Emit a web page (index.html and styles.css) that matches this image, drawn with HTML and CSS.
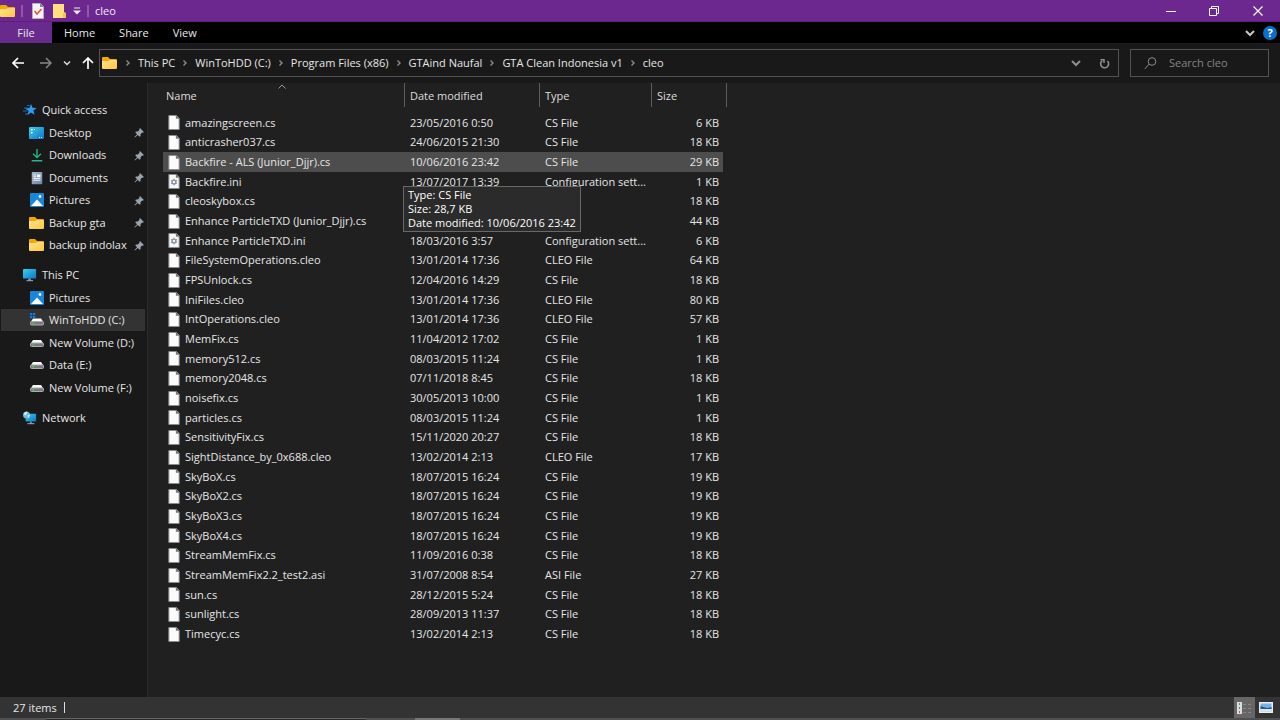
FILE: index.html
```html
<!DOCTYPE html>
<html lang="en">
<head>
<meta charset="utf-8">
<title>cleo</title>
<link rel="stylesheet" href="styles.css">
</head>
<body>
<svg class="sprite" aria-hidden="true">
  <defs>
    <linearGradient id="gold" x1="0" y1="0" x2="1" y2="1"><stop offset="0" stop-color="#ffe391"/><stop offset="1" stop-color="#ffc73c"/></linearGradient>
    <linearGradient id="screen" x1="0" y1="0" x2="1" y2="1"><stop offset="0" stop-color="#37d2ea"/><stop offset="1" stop-color="#1272c8"/></linearGradient>
    <linearGradient id="paper" x1="0" y1="0" x2="1" y2="1"><stop offset="0" stop-color="#a9bad0"/><stop offset="1" stop-color="#6d84a4"/></linearGradient>
    <symbol id="folder" viewBox="0 0 16 14"><path d="M0 2q0-1 1-1h5l2 2h6q1 0 1 1v4H0z" fill="#f5a800"/><path d="M0 5h6l2-1h6q1 0 1 1v7q0 1-1 1H1q-1 0-1-1z" fill="url(#gold)"/></symbol>
    <symbol id="file" viewBox="0 0 12 16"><path d="M.5.5h8l3 3v12H.5z" fill="#fbfbfb" stroke="#8d8d8d"/><path d="M8 0v4h4z" fill="#777"/></symbol>
    <symbol id="ini" viewBox="0 0 12 16"><path d="M.5.5h8l3 3v12H.5z" fill="#f7f7f7" stroke="#8d8d8d"/><path d="M8 0v4h4z" fill="#777"/><circle cx="6" cy="8.500" r="2" fill="none" stroke="#8593a3" stroke-width="1.500"/><path d="M6 5v1.500M6 10.500V12M3 6.800l1.200.7M7.800 9.500l1.200.7M3 10.200l1.200-.7M7.800 7.500L9 6.800" stroke="#8593a3" stroke-width="1.300"/></symbol>
    <symbol id="pin" viewBox="0 0 12 12"><path d="M6.500 1.200l4.300 4.300-1 .7-.9-.2-1.800 1.800.1 2-1 .9-2.100-2.100L1 11.500l-.5-.5 2.900-3.100L1.300 5.800l.9-1 2 .1L6 3.100l-.2-.9z" fill="#9aa4ae"/></symbol>
    <symbol id="star" viewBox="0 0 14 14"><path d="M8 1l1.500 3.800 4.200.2-3.300 2.600 1.200 4.200-3.700-2.300-3.500 2.800 1.200-4.300L2.200 5.600l4.200-.5z" fill="#2a9df4"/><path d="M1 5h4M0 8h4M2 11h3M4 2.500h2.500" stroke="#176fb8"/></symbol>
    <symbol id="desktop" viewBox="0 0 16 14"><rect y="1" width="15" height="12" rx="1" fill="url(#screen)"/><path d="M2 3h1.500v1.500H2zM2 6h1.500v1.500H2zM5 3h1v1H5z" fill="#fff"/><path d="M10 11.500h1M12 11.500h1" stroke="#bfe4ff"/></symbol>
    <symbol id="download" viewBox="0 0 14 16"><path d="M7 1v9M2.500 6.500L7 11l4.500-4.500M1 14.500h12" fill="none" stroke="#25b78b" stroke-width="1.600"/></symbol>
    <symbol id="document" viewBox="0 0 12 16"><rect y="1" width="12" height="14" rx="1" fill="url(#paper)"/><path d="M2 4.500h3M2 6.500h3M2 8.500h8M2 10.500h8" stroke="#fff"/><path d="M6 4h4v3H6z" fill="#fff"/></symbol>
    <symbol id="picture" viewBox="0 0 14 14"><rect width="14" height="14" rx="1" fill="#1787dc"/><path d="M1 13l6-6.500L13 13z" fill="#fff"/><circle cx="10" cy="3.500" r="1.400" fill="#fff"/></symbol>
    <symbol id="monitor" viewBox="0 0 16 16"><rect y="1" width="15" height="11" rx="1" fill="url(#screen)"/><path d="M6 12h3v2H6z" fill="#6e97b4"/><path d="M4 14.500h7.500" stroke="#b4c6d3"/></symbol>
    <symbol id="drive" viewBox="0 0 14 14"><path d="M1 7l2-3h8l2 3z" fill="#fbfbfb"/><rect x=".5" y="7" width="13" height="3.500" rx="1" fill="#777b7d" stroke="#a9adaf"/><path d="M2.500 8.800H4" stroke="#3fdb45" stroke-width="1.500"/></symbol>
    <symbol id="system" viewBox="0 0 14 14"><path d="M1 8.500l2-3h8l2 3z" fill="#fbfbfb"/><rect x=".5" y="8.500" width="13" height="3.500" rx="1" fill="#777b7d" stroke="#a9adaf"/><path d="M2.500 10.300H4" stroke="#3fdb45" stroke-width="1.500"/><path d="M0 0h2.300v2.300H0zM3 0h2.300v2.300H3zM0 3h2.300v2.300H0zM3 3h2.300v2.300H3z" fill="#0b7be0"/></symbol>
    <symbol id="network" viewBox="0 0 16 16"><rect x="3" y="3" width="12" height="9" rx="1" fill="url(#screen)"/><path d="M8 12h2v2H8z" fill="#6e97b4"/><path d="M5 14.500h8" stroke="#b4c6d3"/><circle cx="4" cy="4.500" r="4" fill="#73b4d8"/><path d="M1 3q2-3 4-2l-1 3-2 1zM5 5l2-1 1 1-2 3z" fill="#d5eef6"/></symbol>
    <symbol id="chevron" viewBox="0 0 6 8"><path d="M1.500 1.500L4 4 1.500 6.500" fill="none" stroke="#8c8c8c" stroke-width="1.400"/></symbol>
    <symbol id="down" viewBox="0 0 10 8"><path d="M1 2l4 4 4-4" fill="none" stroke="currentColor" stroke-width="2"/></symbol>
  </defs>
</svg>
<div class="window">
  <header class="titlebar">
    <svg class="folder-icon"><use href="#folder"/></svg>
    <span class="rule"></span>
    <button class="quick" aria-label="Properties"><svg width="12" height="16" viewBox="0 0 12 16"><path d="M.5.5h8l3 3v12H.5z" fill="#f7f3f8" stroke="#b9adbf"/><path d="M8 0v4h4z" fill="#8e8195"/><path d="M2.500 8l2.500 3 4.500-5" fill="none" stroke="#e2572b" stroke-width="1.500"/></svg></button>
    <button class="quick new-folder" aria-label="New folder"><svg width="13" height="16" viewBox="0 0 13 16"><path d="M0 1h11v8l2 1v5H0z" fill="#ffdf80"/><path d="M10 10h3v5h-3z" fill="#f5c34a"/></svg></button>
    <button class="quick" aria-label="Customize toolbar"><svg width="8" height="8" viewBox="0 0 8 8"><path d="M1 1h6" stroke="#eee"/><path d="M0 3.500h8l-4 4z" fill="#eee"/></svg></button>
    <span class="rule"></span>
    <h1 class="title">cleo</h1>
    <div class="controls">
      <button aria-label="Minimize"><svg width="10" height="10" viewBox="0 0 10 10"><path d="M0 5.500h10" stroke="#fff"/></svg></button>
      <button aria-label="Restore"><svg width="10" height="10" viewBox="0 0 10 10"><path d="M.5 2.500h7v7h-7zM2.500 2V.5h7v7H8" fill="none" stroke="#fff"/></svg></button>
      <button aria-label="Close"><svg width="10" height="10" viewBox="0 0 10 10"><path d="M.5.5l9 9M9.500.5l-9 9" stroke="#fff" stroke-width="1.200"/></svg></button>
    </div>
  </header>
  <nav class="ribbon">
    <button class="tab file-tab">File</button>
    <button class="tab">Home</button>
    <button class="tab">Share</button>
    <button class="tab">View</button>
    <div class="ribbon-end">
      <button aria-label="Expand ribbon"><svg width="10" height="8"><use href="#down"/></svg></button>
      <button class="help" aria-label="Help">?</button>
    </div>
  </nav>
  <div class="navbar">
    <div class="history">
      <button aria-label="Back"><svg width="12" height="12" viewBox="0 0 12 12"><path d="M12 6H1M6 1L1 6l5 5" fill="none" stroke="#fff" stroke-width="1.700"/></svg></button>
      <button aria-label="Forward"><svg width="12" height="12" viewBox="0 0 12 12"><path d="M0 6h11M6 1l5 5-5 5" fill="none" stroke="#888" stroke-width="1.500"/></svg></button>
      <button class="recent" aria-label="Recent locations"><svg width="8" height="6" viewBox="0 0 10 8"><path d="M1 2l4 4 4-4" fill="none" stroke="currentColor" stroke-width="2"/></svg></button>
      <button aria-label="Up"><svg width="12" height="12" viewBox="0 0 12 12"><path d="M6 12V1M1 6l5-5 5 5" fill="none" stroke="#fff" stroke-width="1.700"/></svg></button>
    </div>
    <div class="address">
      <svg class="folder-icon"><use href="#folder"/></svg>
      <svg class="chevron"><use href="#chevron"/></svg><button>This PC</button>
      <svg class="chevron"><use href="#chevron"/></svg><button>WinToHDD (C:)</button>
      <svg class="chevron"><use href="#chevron"/></svg><button>Program Files (x86)</button>
      <svg class="chevron"><use href="#chevron"/></svg><button>GTAind Naufal</button>
      <svg class="chevron"><use href="#chevron"/></svg><button>GTA Clean Indonesia v1</button>
      <svg class="chevron"><use href="#chevron"/></svg><button>cleo</button>
      <div class="address-end">
        <button aria-label="Previous locations"><svg width="10" height="8"><use href="#down"/></svg></button>
        <button aria-label="Refresh"><svg width="11" height="11" viewBox="0 0 11 11"><path d="M8.500 3A4 4 0 1 1 3 2.800" fill="none" stroke="#8f8f8f" stroke-width="1.600"/><path d="M5 1v4M5.500 1.800H1.500" stroke="#8f8f8f" stroke-width="1.500"/></svg></button>
      </div>
    </div>
    <label class="search">
      <svg width="13" height="13" viewBox="0 0 13 13"><circle cx="8" cy="4.500" r="3.800" fill="none" stroke="#8a8a8a"/><path d="M5 7.200L.8 12" stroke="#8a8a8a"/></svg>
      <input type="search" placeholder="Search cleo" aria-label="Search cleo">
    </label>
  </div>
  <div class="content">
    <nav class="sidebar">
      <ul class="quick-list">
        <li class="root"><a href="#"><svg class="icon"><use href="#star"/></svg>Quick access</a></li>
        <li><a href="#"><svg class="icon"><use href="#desktop"/></svg>Desktop<svg class="pin"><use href="#pin"/></svg></a></li>
        <li><a href="#"><svg class="icon"><use href="#download"/></svg>Downloads<svg class="pin"><use href="#pin"/></svg></a></li>
        <li><a href="#"><svg class="icon"><use href="#document"/></svg>Documents<svg class="pin"><use href="#pin"/></svg></a></li>
        <li><a href="#"><svg class="icon"><use href="#picture"/></svg>Pictures<svg class="pin"><use href="#pin"/></svg></a></li>
        <li><a href="#"><svg class="icon"><use href="#folder"/></svg>Backup gta<svg class="pin"><use href="#pin"/></svg></a></li>
        <li><a href="#"><svg class="icon"><use href="#folder"/></svg>backup indolax<svg class="pin"><use href="#pin"/></svg></a></li>
      </ul>
      <ul>
        <li class="root"><a href="#"><svg class="icon"><use href="#monitor"/></svg>This PC</a></li>
        <li><a href="#"><svg class="icon"><use href="#picture"/></svg>Pictures</a></li>
        <li class="current"><a href="#"><svg class="icon"><use href="#system"/></svg>WinToHDD (C:)</a></li>
        <li><a href="#"><svg class="icon"><use href="#drive"/></svg>New Volume (D:)</a></li>
        <li><a href="#"><svg class="icon"><use href="#drive"/></svg>Data (E:)</a></li>
        <li><a href="#"><svg class="icon"><use href="#drive"/></svg>New Volume (F:)</a></li>
      </ul>
      <ul>
        <li class="root"><a href="#"><svg class="icon"><use href="#network"/></svg>Network</a></li>
      </ul>
    </nav>
    <main class="files">
      <table>
        <colgroup><col class="col-name"><col class="col-date"><col class="col-type"><col class="col-size"></colgroup>
        <thead><tr><th>Name<svg class="sort" viewBox="0 0 8 5"><path d="M.5 4.500L4 1l3.500 3.500" fill="none" stroke="#999"/></svg></th><th>Date modified</th><th>Type</th><th>Size</th></tr></thead>
        <tbody>
          <tr><td><svg><use href="#file"/></svg>amazingscreen.cs</td><td>23/05/2016 0:50</td><td>CS File</td><td>6 KB</td></tr>
          <tr><td><svg><use href="#file"/></svg>anticrasher037.cs</td><td>24/06/2015 21:30</td><td>CS File</td><td>18 KB</td></tr>
          <tr class="hovered"><td><svg><use href="#file"/></svg>Backfire - ALS (Junior_Djjr).cs</td><td>10/06/2016 23:42</td><td>CS File</td><td>29 KB</td></tr>
          <tr><td><svg><use href="#ini"/></svg>Backfire.ini</td><td>13/07/2017 13:39</td><td>Configuration sett...</td><td>1 KB</td></tr>
          <tr><td><svg><use href="#file"/></svg>cleoskybox.cs</td><td></td><td>CS File</td><td>18 KB</td></tr>
          <tr><td><svg><use href="#file"/></svg>Enhance ParticleTXD (Junior_Djjr).cs</td><td></td><td>CS File</td><td>44 KB</td></tr>
          <tr><td><svg><use href="#ini"/></svg>Enhance ParticleTXD.ini</td><td>18/03/2016 3:57</td><td>Configuration sett...</td><td>6 KB</td></tr>
          <tr><td><svg><use href="#file"/></svg>FileSystemOperations.cleo</td><td>13/01/2014 17:36</td><td>CLEO File</td><td>64 KB</td></tr>
          <tr><td><svg><use href="#file"/></svg>FPSUnlock.cs</td><td>12/04/2016 14:29</td><td>CS File</td><td>18 KB</td></tr>
          <tr><td><svg><use href="#file"/></svg>IniFiles.cleo</td><td>13/01/2014 17:36</td><td>CLEO File</td><td>80 KB</td></tr>
          <tr><td><svg><use href="#file"/></svg>IntOperations.cleo</td><td>13/01/2014 17:36</td><td>CLEO File</td><td>57 KB</td></tr>
          <tr><td><svg><use href="#file"/></svg>MemFix.cs</td><td>11/04/2012 17:02</td><td>CS File</td><td>1 KB</td></tr>
          <tr><td><svg><use href="#file"/></svg>memory512.cs</td><td>08/03/2015 11:24</td><td>CS File</td><td>1 KB</td></tr>
          <tr><td><svg><use href="#file"/></svg>memory2048.cs</td><td>07/11/2018 8:45</td><td>CS File</td><td>18 KB</td></tr>
          <tr><td><svg><use href="#file"/></svg>noisefix.cs</td><td>30/05/2013 10:00</td><td>CS File</td><td>1 KB</td></tr>
          <tr><td><svg><use href="#file"/></svg>particles.cs</td><td>08/03/2015 11:24</td><td>CS File</td><td>1 KB</td></tr>
          <tr><td><svg><use href="#file"/></svg>SensitivityFix.cs</td><td>15/11/2020 20:27</td><td>CS File</td><td>18 KB</td></tr>
          <tr><td><svg><use href="#file"/></svg>SightDistance_by_0x688.cleo</td><td>13/02/2014 2:13</td><td>CLEO File</td><td>17 KB</td></tr>
          <tr><td><svg><use href="#file"/></svg>SkyBoX.cs</td><td>18/07/2015 16:24</td><td>CS File</td><td>19 KB</td></tr>
          <tr><td><svg><use href="#file"/></svg>SkyBoX2.cs</td><td>18/07/2015 16:24</td><td>CS File</td><td>19 KB</td></tr>
          <tr><td><svg><use href="#file"/></svg>SkyBoX3.cs</td><td>18/07/2015 16:24</td><td>CS File</td><td>19 KB</td></tr>
          <tr><td><svg><use href="#file"/></svg>SkyBoX4.cs</td><td>18/07/2015 16:24</td><td>CS File</td><td>19 KB</td></tr>
          <tr><td><svg><use href="#file"/></svg>StreamMemFix.cs</td><td>11/09/2016 0:38</td><td>CS File</td><td>18 KB</td></tr>
          <tr><td><svg><use href="#file"/></svg>StreamMemFix2.2_test2.asi</td><td>31/07/2008 8:54</td><td>ASI File</td><td>27 KB</td></tr>
          <tr><td><svg><use href="#file"/></svg>sun.cs</td><td>28/12/2015 5:24</td><td>CS File</td><td>18 KB</td></tr>
          <tr><td><svg><use href="#file"/></svg>sunlight.cs</td><td>28/09/2013 11:37</td><td>CS File</td><td>18 KB</td></tr>
          <tr><td><svg><use href="#file"/></svg>Timecyc.cs</td><td>13/02/2014 2:13</td><td>CS File</td><td>18 KB</td></tr>
        </tbody>
      </table>
      <div class="tooltip" role="tooltip">Type: CS File<br>Size: 28,7 KB<br>Date modified: 10/06/2016 23:42</div>
    </main>
  </div>
  <footer class="status">
    <span>27 items</span><span class="status-rule"></span>
    <div class="views">
      <button class="active" aria-label="Details view"><svg width="15" height="12" viewBox="0 0 15 12"><path d="M0 0h5v12H0z" fill="#ddd"/><path d="M2 2h1" stroke="#4a9a8a" stroke-width="2"/><path d="M2 6h1" stroke="#3d7fc4" stroke-width="2"/><path d="M2 10h1" stroke="#d0473d" stroke-width="2"/><path d="M6 2.500h3M11 2.500h3M6 6.500h3M11 6.500h3M6 10.500h3M11 10.500h3" stroke="#858585"/></svg></button>
      <button aria-label="Large icons view"><svg width="14" height="11" viewBox="0 0 14 11"><path d="M0 0h14v11H0z" fill="#eee"/><path d="M1.500 1.500h11v8h-11z" fill="#76b2f0"/><path d="M1.500 4l3 1 4 1 4-1v2h-11z" fill="#2c5b6b"/><path d="M1.500 7h11v2.500h-11z" fill="#d9e8f5"/></svg></button>
    </div>
  </footer>
  <div class="taskbar"><span class="task-search"></span><span class="task-active"></span></div>
</div>
</body>
</html>
```
FILE: styles.css
```css
* { box-sizing: border-box; }
body {
  margin: 0;
  background: #202020;
  color: #e6e6e6;
  font: 11px/14px "Open Sans", "Noto Sans", sans-serif;
}
button, input { font: inherit; color: inherit; background: none; border: 0; padding: 0; margin: 0; }
button { display: flex; align-items: center; justify-content: center; white-space: nowrap; }
svg { display: block; flex: none; }
.sprite { position: absolute; width: 0; height: 0; }
.window { min-height: 100vh; display: flex; flex-direction: column; }
.folder-icon { width: 16px; height: 14px; }

.titlebar { display: flex; align-items: center; height: 22px; background: #6d2890; border-bottom: 1px solid #5e1d80; }
.rule { width: 2px; height: 12px; background: #8d5aa8; margin: 0 9px 0 5px; }
.quick + .rule { margin: 0 6px; }
.quick { margin-right: 9px; }
.new-folder { margin-right: 7px; }
.quick:has(+ .rule) { margin-right: 0; }
.title { margin: 0; font-size: 11px; font-weight: 400; color: #f2e9f6; }
.controls { display: flex; margin-left: auto; }
.controls button { width: 43px; height: 20px; }
.controls button:last-child { width: 45px; }

.ribbon { display: flex; height: 21px; background: #000; }
.tab { padding: 0 12px; }
.file-tab { width: 52px; background: #692a8d; }
.ribbon-end { display: flex; align-items: center; gap: 8px; margin-left: auto; padding-right: 3px; color: #c8c8c8; }
.help { width: 14px; height: 14px; border-radius: 50%; background: #0a70cc; color: #fff; font-weight: 700; }

.navbar { display: flex; padding: 6px 11px 6px 0; background: #191919; }
.history { display: flex; align-items: center; width: 99px; padding-left: 12px; gap: 16px; color: #ddd; }
.history .recent { margin: 0 -5px; }
.address { display: flex; flex: 1; align-items: center; height: 28px; border: 1px solid #535353; padding-left: 2px; }
.chevron { width: 6px; height: 8px; margin: 0 7px; }
.address-end { display: flex; gap: 18px; margin-left: auto; padding-right: 8px; color: #8f8f8f; }
.search { display: flex; align-items: center; gap: 12px; width: 139px; margin-left: 11px; padding-left: 13px; border: 1px solid #535353; }
.search input { flex: 1; min-width: 0; outline: 0; }
.search input::placeholder { color: #858585; opacity: 1; }

.content { display: flex; flex: 1; }
.sidebar { width: 148px; padding-top: 16px; background: #191919; border-right: 1px solid #2b2b2b; }
.sidebar ul { display: flex; flex-direction: column; list-style: none; margin: 0 0 8px; padding: 0 2px 0 1px; }
.sidebar li { height: 22px; }
.sidebar li:nth-child(even) { height: 23px; }
.sidebar .current { background: #333; }
.sidebar a { display: flex; align-items: center; height: 100%; padding: 0 0 0 28px; color: inherit; text-decoration: none; white-space: nowrap; }
.sidebar .root a { padding-left: 21px; }
.icon { width: 16px; height: 14px; margin-right: 4px; }
.pin { width: 11px; height: 11px; margin-left: auto; }

.files { position: relative; flex: 1; padding-left: 15px; }
table { border-collapse: collapse; table-layout: fixed; width: 560px; }
.col-name { width: 241px; }
.col-date { width: 135px; }
.col-type { width: 112px; }
.col-size { width: 72px; }
th, td { padding: 0 0 0 6px; text-align: left; font-weight: 400; white-space: nowrap; }
th { position: relative; height: 30px; padding-bottom: 5px; color: #ddd; }
th:first-child { padding-left: 3px; }
th::after { content: ""; position: absolute; right: -1px; top: 0; width: 1px; height: 24px; background: #5c5c5c; }
th:last-child::after { right: -4px; }
.sort { position: absolute; left: 115px; top: 1px; width: 8px; height: 5px; }
tbody tr { height: 20px; }
tbody tr:nth-child(3n + 1) { height: 19px; }
td:first-child { display: flex; align-items: center; gap: 5px; height: inherit; padding-left: 5px; }
td svg { width: 12px; height: 15px; }
td:last-child { padding: 0 4px 0 0; text-align: right; }
.hovered { background: #4d4d4d; }
.tooltip { position: absolute; left: 255px; top: 103px; padding: 1px 4px; border: 1px solid #686868; background: #2b2b2b; color: #fff; white-space: nowrap; }

.status { display: flex; align-items: center; height: 21px; padding: 0 4px 0 13px; background: #333; }
.status-rule { width: 1px; height: 11px; margin-left: 7px; background: #ddd; }
.views { display: flex; height: 100%; margin-left: auto; }
.views button { width: 21px; }
.views .active { background: #666; }
.taskbar { display: flex; height: 2px; padding-left: 46px; background: #505050; }
.task-search { width: 320px; margin-right: 49px; background: #2b2b2b; border-top: 1px solid #666; }
.task-active { width: 45px; background: #777; }
```
